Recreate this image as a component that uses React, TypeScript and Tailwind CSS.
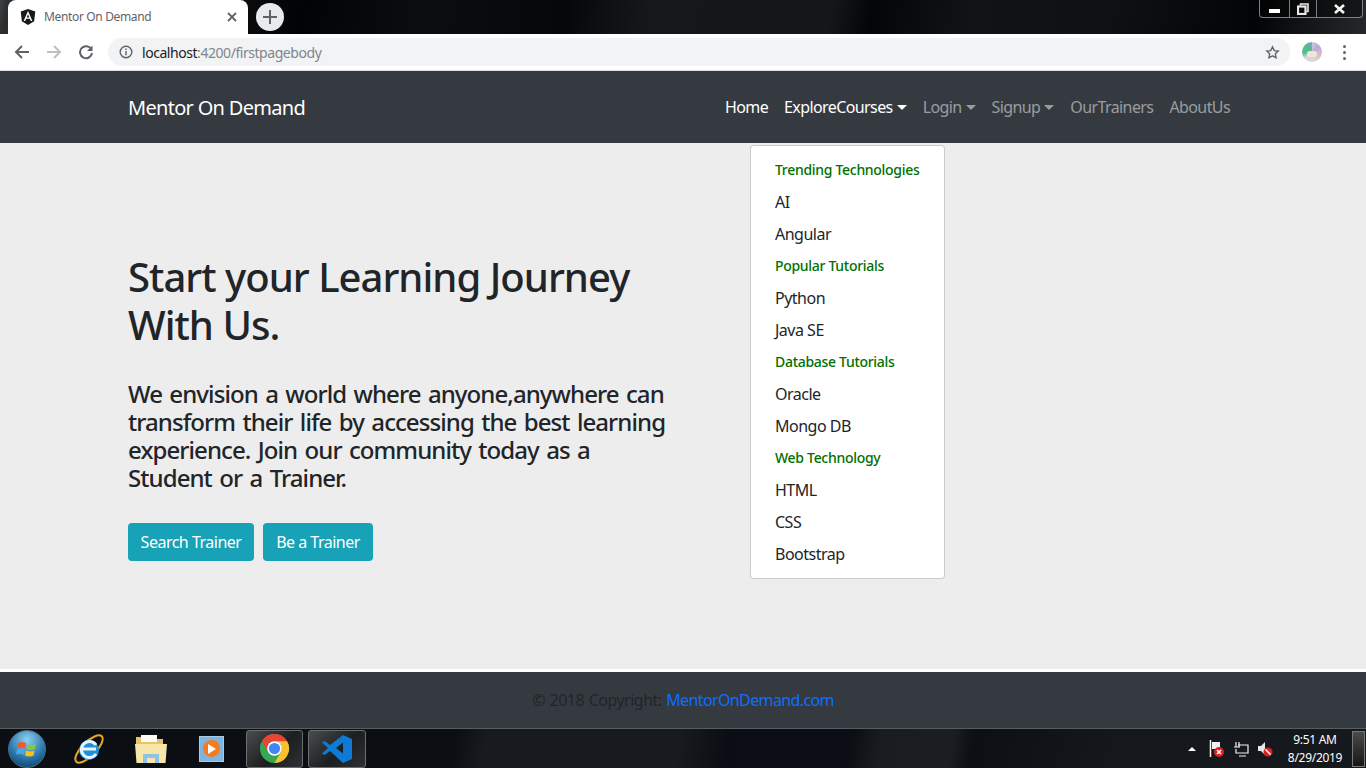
const font = "font-['Noto_Sans','Open_Sans',sans-serif]";

function AngularIcon() {
  return (
    <svg width="16" height="16" viewBox="0 0 32 32">
      <path d="M16 0 1.500 5.200l2.200 19.200L16 32l12.300-7.600 2.200-19.200z" fill="#16181b" />
      <path d="M16 4 7.200 24h3.300l1.800-4.500h7.400l1.800 4.500h3.300zm2.600 12.900h-5.200L16 10.600z" fill="#fff" />
    </svg>
  );
}

function TabStrip() {
  return (
    <div className="h-[34px] bg-[linear-gradient(100deg,#3f4244_0px,#2b2d2f_8px,#020304_300px,#0b0d0f_420px,#060708_560px,#15181a_640px,#14171a_820px,#040506_860px,#111315_960px,#0e1012_1100px,#030405_1240px,#2a2d2f_1366px)] flex items-end relative shrink-0">
      <div className="w-[240px] h-[34px] ml-[8px] bg-white rounded-t-[8px] flex items-center pl-[12px] pr-[11px]">
        <AngularIcon />
        <span className="ml-[8px] text-[12px] text-[#5f6368] tracking-[-0.35px] flex-1">Mentor On Demand</span>
        <svg width="10" height="10" viewBox="0 0 10 10" stroke="#5f6368" strokeWidth="1.800">
          <path d="M1 1l8 8M9 1l-8 8" />
        </svg>
      </div>
      <div className="ml-[8px] mb-[3px] w-[28px] h-[28px] rounded-full bg-[#e8eaed] flex items-center justify-center">
        <svg width="14" height="14" viewBox="0 0 14 14" stroke="#5f6368" strokeWidth="2">
          <path d="M7 0v14M0 7h14" />
        </svg>
      </div>
      <div className="absolute right-[3px] top-0 w-[104px] h-[18px] border border-t-0 border-[#7d8082] rounded-b-[4px] flex bg-black/40">
        <div className="w-[30px] border-r border-[#7d8082] flex items-center justify-center">
          <div className="w-[11px] h-[4px] mt-[4px] bg-white" />
        </div>
        <div className="w-[27px] border-r border-[#7d8082] flex items-center justify-center">
          <svg width="12" height="12" viewBox="0 0 12 12" fill="none" stroke="#e8e8e8" strokeWidth="1.600">
            <path d="M3.500 2.500V1h7.500v7.500H9.500" />
            <rect x="1" y="3.500" width="7.500" height="7.500" strokeWidth="2.200" />
          </svg>
        </div>
        <div className="flex-1 flex items-center justify-center">
          <svg width="11" height="10" viewBox="0 0 11 10" stroke="#f4f4f4" strokeWidth="2.600">
            <path d="M1 1l9 8M10 1l-9 8" />
          </svg>
        </div>
      </div>
    </div>
  );
}

function AddressBar() {
  return (
    <div className="h-[36px] bg-white flex items-center shrink-0 border-b border-[#dadce0] box-content">
      <svg className="ml-[14px]" width="16" height="16" viewBox="0 0 16 16" fill="none" stroke="#5f6368" strokeWidth="2">
        <path d="M15 8H2M8 2 2 8l6 6" />
      </svg>
      <svg className="ml-[16px]" width="16" height="16" viewBox="0 0 16 16" fill="none" stroke="#bdc1c6" strokeWidth="2">
        <path d="M1 8h13M8 2l6 6-6 6" />
      </svg>
      <svg className="ml-[16px]" width="16" height="16" viewBox="0 0 16 16" fill="none">
        <path d="M13.400 5.500A6 6 0 1 0 14 9" stroke="#5f6368" strokeWidth="2" />
        <path d="M14.500 1.500v5.500H9z" fill="#5f6368" />
      </svg>
      <div className="ml-[14px] w-[1182px] h-[28px] rounded-full bg-[#f1f3f4] flex items-center pl-[11px] pr-[10px]">
        <svg width="14" height="14" viewBox="0 0 14 14" fill="none" stroke="#5f6368" strokeWidth="1.400">
          <circle cx="7" cy="7" r="5.800" />
          <path d="M7 6v4.200M7 3.500v1.400" />
        </svg>
        <span className="ml-[9px] text-[14px] text-[#80868b] tracking-[-0.45px] flex-1">
          <span className="text-[#202124]">localhost</span>:4200/firstpagebody
        </span>
        <svg width="15" height="15" viewBox="0 0 24 24" fill="none" stroke="#5f6368" strokeWidth="2.200">
          <path d="m12 3 2.800 5.900 6.400.8-4.700 4.400 1.200 6.400L12 17.400l-5.700 3.100 1.200-6.400L2.800 9.700l6.400-.8z" />
        </svg>
      </div>
      <div className="ml-[12px] w-[20px] h-[20px] rounded-full overflow-hidden bg-[conic-gradient(#c9c9d6_0deg,#b7a8dd_50deg,#d9b8c8_100deg,#d8d8d8_170deg,#d8d8d8_230deg,#55c08f_260deg,#58b98c_330deg,#7f9fe0_360deg)] flex items-center justify-center">
        <div className="w-[10px] h-[6px] rounded-full bg-[#efe6d8] mt-[4px]" />
      </div>
      <div className="ml-[21px] flex flex-col gap-[3px]">
        <div className="w-[3px] h-[3px] rounded-full bg-[#5f6368]" />
        <div className="w-[3px] h-[3px] rounded-full bg-[#5f6368]" />
        <div className="w-[3px] h-[3px] rounded-full bg-[#5f6368]" />
      </div>
    </div>
  );
}

function NavItem({ label, active, caret }: { label: string; active?: boolean; caret?: boolean }) {
  return (
    <a className={`flex items-center px-[8px] text-[16px] tracking-[-0.6px] ${active ? 'text-white' : 'text-white/50'}`}>
      {label}
      {caret && (
        <span className={`ml-[4px] mt-[1px] w-0 h-0 border-x-[5px] border-x-transparent border-t-[5px] ${active ? 'border-t-white' : 'border-t-white/50'}`} />
      )}
    </a>
  );
}

function Navbar() {
  return (
    <nav className="h-[72px] bg-[#343a40] flex items-center pl-[128px] pr-[128px] shrink-0">
      <a className="text-[20px] text-white tracking-[-0.7px] pt-[2px]">Mentor On Demand</a>
      <div className="ml-auto flex">
        <NavItem label="Home" active />
        <NavItem label="ExploreCourses" active caret />
        <NavItem label="Login" caret />
        <NavItem label="Signup" caret />
        <NavItem label="OurTrainers" />
        <NavItem label="AboutUs" />
      </div>
    </nav>
  );
}

const menu = [
  { label: 'Trending Technologies', head: true },
  { label: 'AI' },
  { label: 'Angular' },
  { label: 'Popular Tutorials', head: true },
  { label: 'Python' },
  { label: 'Java SE' },
  { label: 'Database Tutorials', head: true },
  { label: 'Oracle' },
  { label: 'Mongo DB' },
  { label: 'Web Technology', head: true },
  { label: 'HTML' },
  { label: 'CSS' },
  { label: 'Bootstrap' },
];

function Dropdown() {
  return (
    <div className="absolute left-[750px] top-[2px] w-[195px] bg-white border border-black/20 rounded-[4px] py-[8px]">
      {menu.map((m) => (
        <div
          key={m.label}
          className={`h-[32px] px-[24px] flex items-center whitespace-nowrap ${
            m.head ? 'text-[14px] font-medium text-[#007000] tracking-[-0.3px] pb-[2px]' : 'text-[16px] text-[#212529] tracking-[-0.5px]'
          }`}
        >
          {m.label}
        </div>
      ))}
    </div>
  );
}

function Hero() {
  return (
    <main className="flex-1 bg-[#ededed] relative pl-[128px] pt-[110px]">
      <h1 className="text-[40px] leading-[48px] font-medium text-[#212529] tracking-[-0.97px] w-[540px]">
        Start your Learning Journey With Us.
      </h1>
      <p className="mt-[31px] text-[24px] leading-[28px] font-medium text-[#212529] tracking-[-0.92px] [word-spacing:2px] w-[542px]">
        We envision a world where anyone,anywhere can transform their life by accessing the best learning experience. Join our community today as a Student or a Trainer.
      </p>
      <div className="mt-[31px] flex gap-[9px]">
        <button className="h-[38px] w-[126px] bg-[#17a2b8] text-white text-[16px] rounded-[4px] tracking-[-0.5px]">Search Trainer</button>
        <button className="h-[38px] w-[110px] bg-[#17a2b8] text-white text-[16px] rounded-[4px] tracking-[-0.5px]">Be a Trainer</button>
      </div>
      <Dropdown />
    </main>
  );
}

function Footer() {
  return (
    <footer className="h-[56px] mt-[3px] bg-[#343a40] flex items-center justify-center shrink-0 text-[16px]">
      <span className="text-[#212529] tracking-[-0.52px] [word-spacing:1px]">© 2018 Copyright:&nbsp;</span>
      <a className="text-[#0d6efd] tracking-[-0.62px]">MentorOnDemand.com</a>
    </footer>
  );
}

function Taskbar() {
  return (
    <div className="h-[40px] bg-[linear-gradient(100deg,#0b0e13_0px,#0b0e13_450px,#171a1e_480px,#171a1f_670px,#0a0d13_720px,#0b0e14_840px,#191c20_870px,#1a1d21_940px,#0c0f13_960px,#14171b_1100px,#15181c_1366px)] border-t border-[#5a5d60] flex items-center shrink-0 relative">
      <div className="ml-[8px] w-[38px] h-[38px] rounded-full bg-[radial-gradient(circle_at_50%_25%,#8fd0ee,#2a78ad_55%,#0c2f4f)] border border-[#4a6f88] flex items-center justify-center">
        <svg width="22" height="20" viewBox="0 0 22 20">
          <path d="M2 4c3-1.500 5-1 8 .5L9 9.500C6 8 4 8 1 9z" fill="#f0592b" />
          <path d="M11.500 5c3 1.500 5 1.500 8.500 0l-1 5c-3 1.500-5.500 1-8.500 0z" fill="#8cc63f" />
          <path d="M1 10.500c3-1 5-1 8 .5l-1 5c-3-1.500-5-1.500-8-.5z" fill="#4ea5e8" />
          <path d="M10 11.500c3 1 5.500 1.500 8.500 0l-1 5c-3 1.500-5.500 1-8.500 0z" fill="#ffc20e" />
        </svg>
      </div>
      <div className="ml-[26px] w-[34px] h-[34px] flex items-center justify-center">
        <svg width="34" height="34" viewBox="0 0 34 34" fill="none">
          <ellipse cx="17" cy="17" rx="18" ry="7" transform="rotate(-45 17 17)" stroke="#e5a823" strokeWidth="2" />
          <circle cx="17" cy="18" r="10" fill="#1f8fd8" />
          <path d="M10 17h14M24 22a8 8 0 1 1 0-9" stroke="#e6f6ff" strokeWidth="3" />
        </svg>
      </div>
      <div className="ml-[28px] w-[34px] h-[34px] flex items-center justify-center">
        <svg width="32" height="30" viewBox="0 0 32 30">
          <path d="M1 3h10l2 2h15v6H1z" fill="#e6c46a" />
          <rect x="6" y="1" width="16" height="7" fill="#fdfdf5" />
          <path d="M0 10h32l-1.500 19H1.500z" fill="#f6e6a8" />
          <path d="M8 29v-9h16v9h-4v-5h-8v5z" fill="#8fc3e6" />
        </svg>
      </div>
      <div className="ml-[26px] w-[34px] h-[34px] flex items-center justify-center">
        <div className="w-[25px] h-[26px] bg-[#7fb4de] border border-[#a8cbe6] flex items-center justify-center">
          <div className="w-[17px] h-[17px] rounded-full bg-[#f47b20] flex items-center justify-center">
            <div className="ml-[2px] w-0 h-0 border-y-[5px] border-y-transparent border-l-[8px] border-l-white" />
          </div>
        </div>
      </div>
      <div className="ml-[18px] w-[57px] h-[38px] rounded-[3px] border border-[#6b6e70] bg-[linear-gradient(135deg,#4a4d4f,#1c1e20_55%,#2e3133)] flex items-center justify-center">
        <svg width="31" height="31" viewBox="0 0 32 32">
          <circle cx="16" cy="16" r="15" fill="#34a853" />
          <path d="M16 8.500H29A15 15 0 0 0 3 8.500L9.500 19.750A7.500 7.500 0 0 1 16 8.500z" fill="#ea4335" />
          <path d="M29 8.500A15 15 0 0 1 16 31L22.500 19.750A7.500 7.500 0 0 0 16 8.500z" fill="#fbc02d" />
          <circle cx="16" cy="16" r="7.500" fill="#fff" />
          <circle cx="16" cy="16" r="5.800" fill="#4285f4" />
        </svg>
      </div>
      <div className="ml-[5px] w-[58px] h-[38px] rounded-[3px] border border-[#6b6e70] bg-[linear-gradient(135deg,#4a4d4f,#1c1e20_55%,#2e3133)] flex items-center justify-center">
        <svg width="32" height="32" viewBox="0 0 32 32">
          <path d="M22 2 31 6v20l-9 4L9 18l-5.500 4L1 20.500 7 15 1 9.500 3.500 8 9 12zM22 9.500 15 15l7 5.500z" fill="#0f7ad6" />
        </svg>
      </div>
      <div className="ml-auto flex items-center h-full text-white">
        <div className="w-0 h-0 border-x-[4px] border-x-transparent border-b-[4px] border-b-white mr-[13px]" />
        <svg width="16" height="18" viewBox="0 0 16 18">
          <path d="M1.500 0v17" stroke="#fff" strokeWidth="1.500" />
          <path d="M3 2h8v7H3z" fill="#f2f2f2" />
          <circle cx="10" cy="12" r="5" fill="#e02020" />
          <path d="M8 10l4 4M12 10l-4 4" stroke="#fff" strokeWidth="1.500" />
        </svg>
        <svg className="ml-[8px]" width="16" height="16" viewBox="0 0 16 16" fill="none" stroke="#f2f2f2" strokeWidth="1.200">
          <path d="M3 1v5M6 1v5M1 6h6M5 4h10v8H3V8M6 15h7" />
        </svg>
        <svg className="ml-[8px]" width="16" height="16" viewBox="0 0 16 16">
          <path d="M1 5h3l4-4v13L4 10H1z" fill="#e8e8e8" />
          <circle cx="11" cy="11" r="4.500" fill="#e02020" />
          <path d="M8.500 8.500l5 5" stroke="#fff" strokeWidth="1.600" />
        </svg>
        <div className="ml-[12px] w-[60px] flex flex-col items-center text-[12px] leading-[18px] text-white tracking-[-0.3px]">
          <span>9:51 AM</span>
          <span>8/29/2019</span>
        </div>
        <div className="ml-[7px] mr-[1px] w-[13px] h-[36px] border border-[#777] bg-[linear-gradient(180deg,#4a4a4a,#161616)]" />
      </div>
    </div>
  );
}

export default function App() {
  return (
    <div className={`w-[1366px] h-[768px] flex flex-col overflow-hidden bg-white ${font}`}>
      <TabStrip />
      <AddressBar />
      <Navbar />
      <Hero />
      <Footer />
      <Taskbar />
    </div>
  );
}
